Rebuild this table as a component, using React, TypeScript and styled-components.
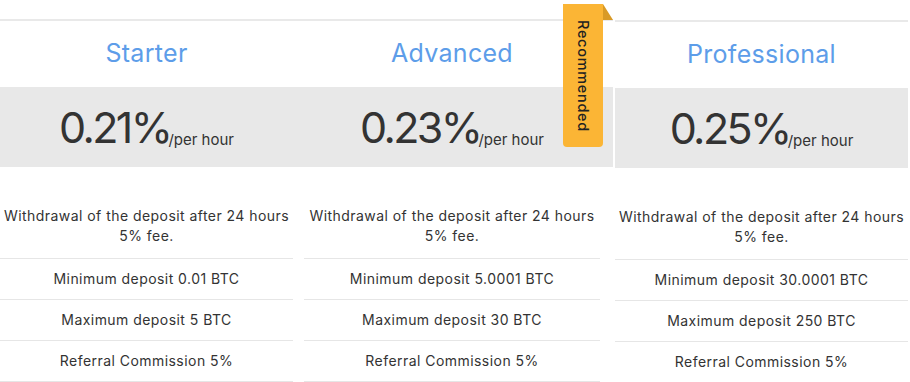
import styled, { createGlobalStyle } from 'styled-components'

const GlobalStyle = createGlobalStyle`
  html, body {
    margin: 0;
    padding: 0;
    background: #ffffff;
    font-family: Inter, "Open Sans", sans-serif;
    color: #333333;
  }
`

type Plan = {
  name: string
  rate: string
  min: string
  max: string
  width: number
  inset: number
  drop: number
  recommended?: boolean
}

const plans: Plan[] = [
  { name: 'Starter', rate: '0.21%', min: '0.01', max: '5', width: 304, inset: 11, drop: 0 },
  { name: 'Advanced', rate: '0.23%', min: '5.0001', max: '30', width: 309, inset: 13, drop: 0, recommended: true },
  { name: 'Professional', rate: '0.25%', min: '30.0001', max: '250', width: 293, inset: 0, drop: 1 }
]

export default function App() {
  return (
    <>
      <GlobalStyle />
      <Row>
        {plans.map((plan) => (
          <Card key={plan.name} $width={plan.width} $drop={plan.drop}>
            {plan.recommended && (
              <Ribbon>
                <RibbonText>Recommended</RibbonText>
              </Ribbon>
            )}
            <Title $inset={plan.inset}>{plan.name}</Title>
            <PriceBand $inset={plan.inset}>
              <Rate>{plan.rate}</Rate>
              <Per>/per hour</Per>
            </PriceBand>
            <List $inset={plan.inset}>
              <Item>
                Withdrawal of the deposit after 24 hours
                <br />
                5% fee.
              </Item>
              <Item>Minimum deposit {plan.min} BTC</Item>
              <Item>Maximum deposit {plan.max} BTC</Item>
              <Item>Referral Commission 5%</Item>
            </List>
          </Card>
        ))}
      </Row>
    </>
  )
}

const Row = styled.div`
  display: flex;
  align-items: flex-start;
  gap: 2px;
  padding-top: 19px;
  width: 910px;
`

const Card = styled.div<{ $width: number; $drop: number }>`
  position: relative;
  flex: 0 0 ${(p) => p.$width}px;
  margin-top: ${(p) => p.$drop}px;
  border-top: 2px solid #e9e9e9;
  &:first-child {
    margin-right: -2px;
  }
`

const Title = styled.h2<{ $inset: number }>`
  margin: 0;
  height: 64px;
  padding-bottom: 2px;
  padding-right: ${(p) => p.$inset}px;
  display: flex;
  align-items: center;
  justify-content: center;
  font-size: 25px;
  font-weight: 400;
  color: #5d9de9;
  letter-spacing: 0.3px;
`

const PriceBand = styled.div<{ $inset: number }>`
  height: 80px;
  background: #e8e8e8;
  padding-right: ${(p) => p.$inset}px;
  display: flex;
  align-items: baseline;
  justify-content: center;
  line-height: 80px;
`

const Rate = styled.span`
  font-size: 43px;
  font-weight: 400;
  color: #333333;
  letter-spacing: -2.6px;
  margin-right: -2px;
`

const Per = styled.span`
  font-size: 15px;
  color: #333333;
  position: relative;
  top: 2px;
`

const List = styled.ul<{ $inset: number }>`
  list-style: none;
  margin: 30px 0 0;
  padding: 0 ${(p) => p.$inset}px 0 0;
`

const Item = styled.li`
  padding: 10px 0;
  border-bottom: 1px solid #e6e6e6;
  text-align: center;
  font-size: 14px;
  line-height: 20px;
  letter-spacing: 0.45px;
  color: #333333;
  &:first-child {
    padding-top: 9px;
    padding-bottom: 12px;
  }
`

const Ribbon = styled.div`
  position: absolute;
  top: -17px;
  right: 10px;
  width: 40px;
  height: 143px;
  background: #fbb535;
  border-radius: 0 0 4px 4px;
  display: flex;
  justify-content: center;
  padding-top: 16px;
  box-sizing: border-box;
  &::after {
    content: '';
    position: absolute;
    top: 0;
    right: -10px;
    border-left: 10px solid #d99a26;
    border-top: 16px solid transparent;
  }
`

const RibbonText = styled.span`
  writing-mode: vertical-rl;
  font-size: 14.5px;
  font-weight: 500;
  color: #222222;
  letter-spacing: 0.7px;
`
